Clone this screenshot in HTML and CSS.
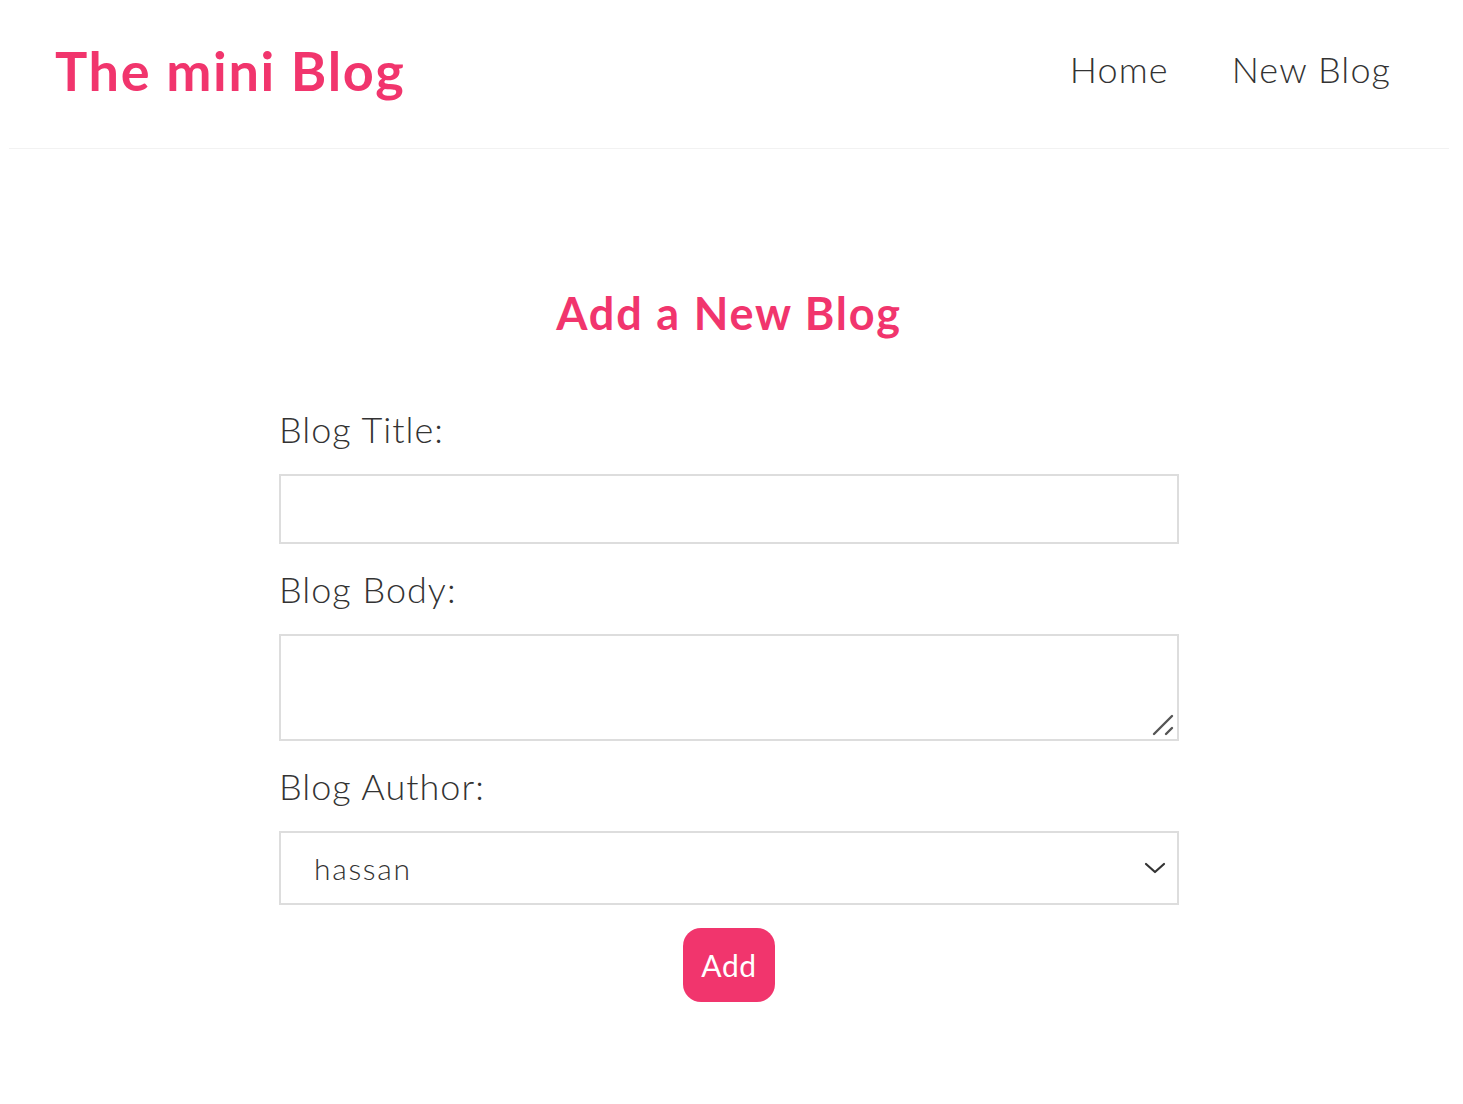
FILE: index.html
```html
<!DOCTYPE html>
<html lang="en">
<head>
<meta charset="utf-8">
<title>The mini Blog</title>
<link rel="stylesheet" href="styles.css">
</head>
<body>
<div class="app">
  <nav class="navbar">
    <h1 class="brand">The mini Blog</h1>
    <div class="links">
      <a href="#" class="link">Home</a>
      <a href="#" class="link">New Blog</a>
    </div>
  </nav>
  <div class="content">
    <div class="create">
      <h2 class="create-title">Add a New Blog</h2>
      <form class="form">
        <label class="label">Blog Title:</label>
        <input type="text" class="field field-input">
        <label class="label">Blog Body:</label>
        <div class="textarea-wrap">
          <textarea class="field field-textarea"></textarea>
          <svg class="grip" width="22" height="22" viewBox="0 0 22 22"><path d="M2 20 L20 2 M14 20 L20 14" stroke="#555" stroke-width="2.4" stroke-linecap="round" fill="none"/></svg>
        </div>
        <label class="label">Blog Author:</label>
        <div class="select-wrap">
          <select class="field field-select">
            <option>hassan</option>
            <option>ali</option>
          </select>
          <svg class="chevron" width="22" height="14" viewBox="0 0 22 14"><path d="M2 3 L11 11 L20 3" stroke="#333" stroke-width="2.2" fill="none" stroke-linecap="round" stroke-linejoin="round"/></svg>
        </div>
        <div class="actions">
          <button type="button" class="btn">Add</button>
        </div>
      </form>
    </div>
  </div>
</div>
</body>
</html>
```

FILE: styles.css
```css
* {
  margin: 0;
  box-sizing: border-box;
}

html, body {
  background: #fff;
}

body {
  margin: 0;
  font-family: "Lato", "Open Sans", sans-serif;
  color: #333;
}

.app {
  margin: 0 14px 0 9px;
}

.navbar {
  display: flex;
  align-items: center;
  height: 149px;
  padding: 0 45px 0 46px;
  border-bottom: 1px solid #f2f2f2;
}

.brand {
  font-size: 54px;
  font-weight: 700;
  color: #f1356d;
  line-height: 1;
  letter-spacing: 1.7px;
  margin-top: -6px;
}

.links {
  margin-left: auto;
  display: flex;
  margin-top: -9px;
}

.link {
  margin-left: 37px;
  padding: 0 13px;
  font-size: 36px;
  font-weight: 300;
  letter-spacing: 1.1px;
  color: #333;
  text-decoration: none;
  line-height: 45px;
}

.content {
  padding-top: 136px;
}

.create {
  width: 900px;
  margin: 0 auto;
  text-align: center;
}

.create-title {
  font-size: 45px;
  font-weight: 700;
  color: #f1356d;
  line-height: 56px;
  letter-spacing: 1.8px;
  margin-bottom: 65.5px;
}

.form {
  display: block;
}

.label {
  display: block;
  text-align: left;
  font-size: 36px;
  font-weight: 300;
  line-height: 45px;
  letter-spacing: 1px;
  color: #333;
}

.field {
  display: block;
  width: 100%;
  margin: 22.5px 0;
  border: 2px solid #ddd;
  background: #fff;
  font-family: "Lato", "Open Sans", sans-serif;
  font-weight: 300;
  color: #333;
  outline: none;
  border-radius: 0;
}

.field-input {
  height: 70px;
  padding: 0 22px;
  font-size: 30px;
}

.textarea-wrap {
  position: relative;
  margin: 22.5px 0;
}

.field-textarea {
  height: 107px;
  margin: 0;
  resize: none;
  padding: 13px 22px;
  font-size: 30px;
}

.grip {
  position: absolute;
  right: 5px;
  bottom: 5px;
}

.select-wrap {
  position: relative;
  margin: 22.5px 0;
}

.field-select {
  height: 74px;
  margin: 0;
  padding: 0 30px 0 33px;
  font-size: 30px;
  letter-spacing: 1.7px;
  -webkit-appearance: none;
  appearance: none;
}

.chevron {
  position: absolute;
  right: 13px;
  top: 30px;
  pointer-events: none;
}

.actions {
  display: flex;
  justify-content: center;
}

.btn {
  width: 92px;
  height: 74px;
  background: #f1356d;
  color: #fff;
  border: 0;
  border-radius: 18px;
  font-family: "Lato", "Open Sans", sans-serif;
  font-weight: 400;
  font-size: 30px;
  letter-spacing: 0.6px;
  cursor: pointer;
}
```
